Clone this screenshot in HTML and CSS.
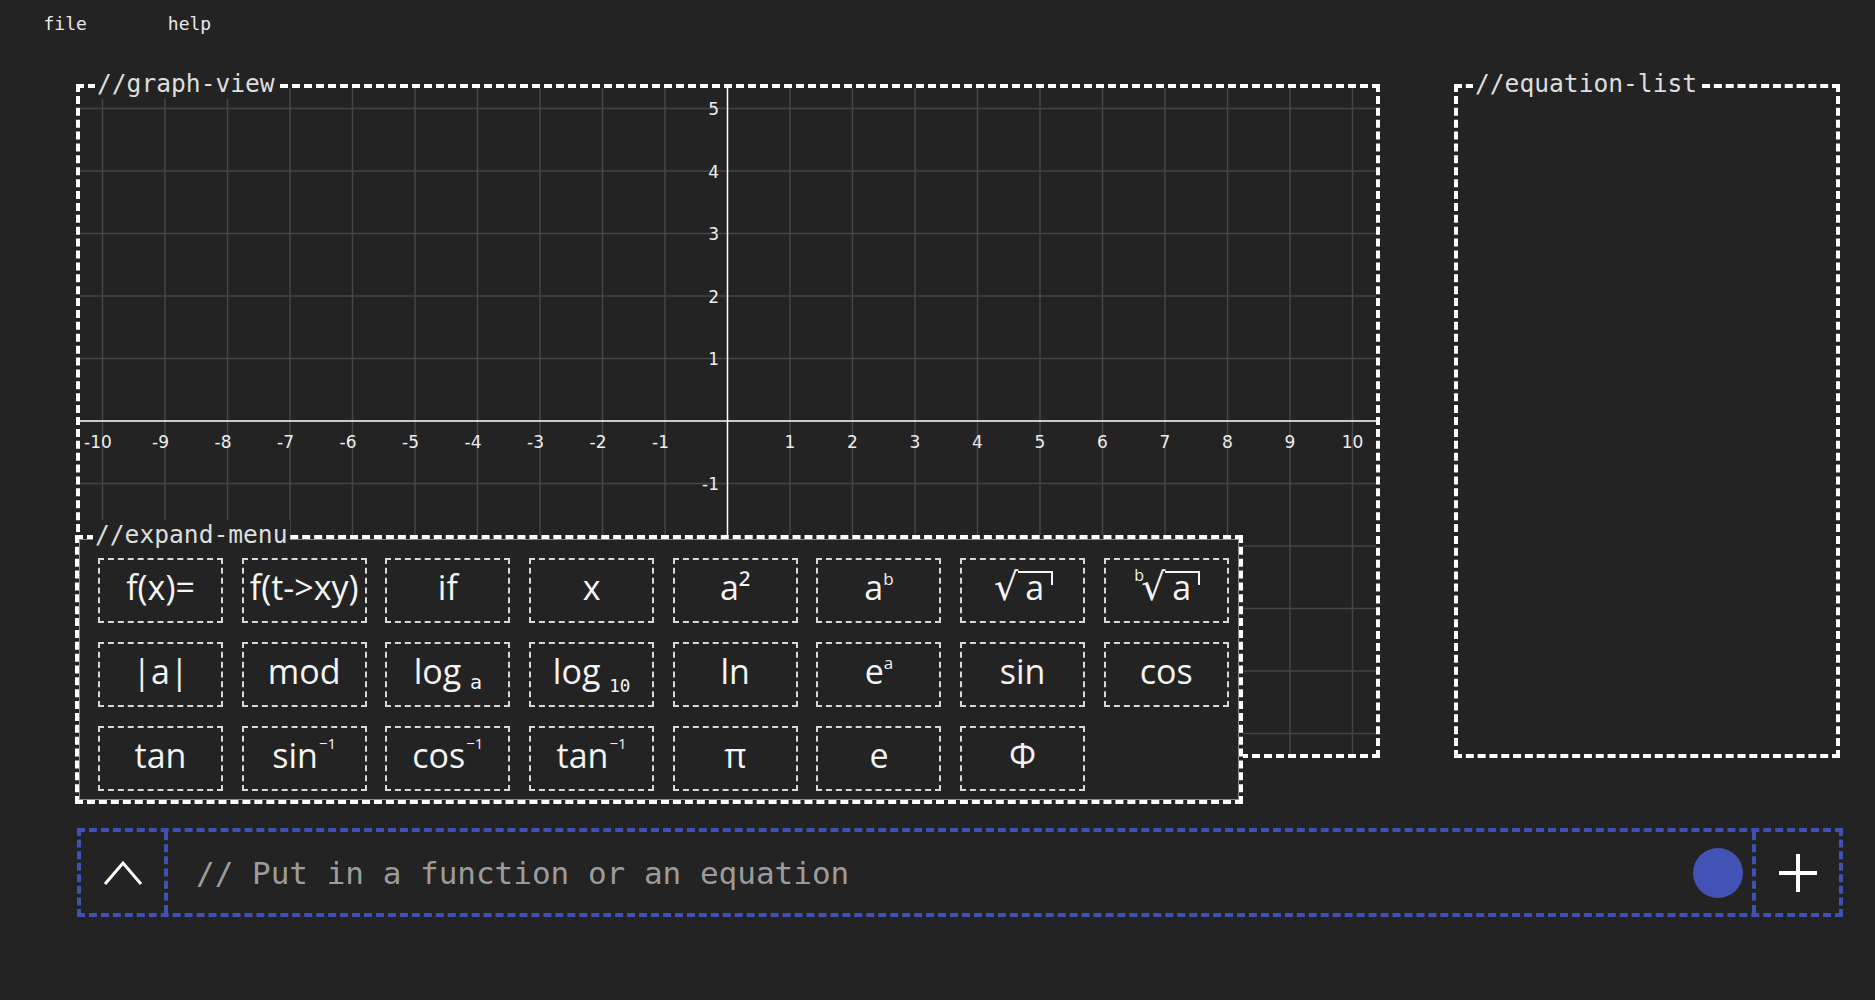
FILE: index.html
```html
<!DOCTYPE html>
<html lang="en">
<head>
<meta charset="utf-8">
<title>Graph</title>
<link rel="stylesheet" href="styles.css">
</head>
<body>
<nav class="menubar">
  <span class="menu-item">file</span>
  <span class="menu-item">help</span>
</nav>
<main class="app">
  <div class="workspace">
    <section class="panel graph-view">
      <span class="legend">//graph-view</span>
      <svg class="graph" viewBox="0 0 1296 666" xmlns="http://www.w3.org/2000/svg">
        <g transform="translate(-1 -1)">
        <path class="grid" d="M23.5 0V668M86 0V668M148.5 0V668M211 0V668M273.5 0V668M336 0V668M398.5 0V668M461 0V668M523.5 0V668M586 0V668M711 0V668M773.5 0V668M836 0V668M898.5 0V668M961 0V668M1023.5 0V668M1086 0V668M1148.5 0V668M1211 0V668M1273.5 0V668M0 21.5H1298M0 84H1298M0 146.5H1298M0 209H1298M0 271.5H1298M0 396.5H1298M0 459H1298M0 521.5H1298M0 584H1298M0 646.5H1298"/>
        <path class="axis" d="M0 334H1298M648.5 0V668"/>
        <g class="xlabels">
          <text x="19" y="361">-10</text>
          <text x="81.5" y="361">-9</text>
          <text x="144" y="361">-8</text>
          <text x="206.5" y="361">-7</text>
          <text x="269" y="361">-6</text>
          <text x="331.5" y="361">-5</text>
          <text x="394" y="361">-4</text>
          <text x="456.5" y="361">-3</text>
          <text x="519" y="361">-2</text>
          <text x="581.5" y="361">-1</text>
          <text x="711" y="361">1</text>
          <text x="773.5" y="361">2</text>
          <text x="836" y="361">3</text>
          <text x="898.5" y="361">4</text>
          <text x="961" y="361">5</text>
          <text x="1023.5" y="361">6</text>
          <text x="1086" y="361">7</text>
          <text x="1148.5" y="361">8</text>
          <text x="1211" y="361">9</text>
          <text x="1273.5" y="361">10</text>
        </g>
        <g class="ylabels">
          <text x="640" y="28">5</text>
          <text x="640" y="90.5">4</text>
          <text x="640" y="153">3</text>
          <text x="640" y="215.5">2</text>
          <text x="640" y="278">1</text>
          <text x="640" y="403">-1</text>
          <text x="640" y="465.5">-2</text>
          <text x="640" y="528">-3</text>
          <text x="640" y="590.5">-4</text>
          <text x="640" y="653">-5</text>
        </g>
        </g>
      </svg>
    </section>
    <section class="panel equation-list">
      <span class="legend">//equation-list</span>
    </section>
    <section class="expand-menu">
      <span class="legend">//expand-menu</span>
      <div class="keys">
        <div class="key">f(x)=</div>
        <div class="key">f(t-&gt;xy)</div>
        <div class="key">if</div>
        <div class="key">x</div>
        <div class="key">a²</div>
        <div class="key">a<sup>b</sup></div>
        <div class="key"><span class="rad">√</span><span class="radicand">a</span></div>
        <div class="key"><sup class="idx">b</sup><span class="rad">√</span><span class="radicand">a</span></div>
        <div class="key">|a|</div>
        <div class="key">mod</div>
        <div class="key">log <sub class="sub-a">a</sub></div>
        <div class="key">log <sub class="sub-10">10</sub></div>
        <div class="key">ln</div>
        <div class="key">e<sup>a</sup></div>
        <div class="key">sin</div>
        <div class="key">cos</div>
        <div class="key">tan</div>
        <div class="key">sin<sup class="inv">−1</sup></div>
        <div class="key">cos<sup class="inv">−1</sup></div>
        <div class="key">tan<sup class="inv">−1</sup></div>
        <div class="key">π</div>
        <div class="key">e</div>
        <div class="key">Φ</div>
      </div>
    </section>
  </div>
  <div class="input-bar">
    <button class="cell chev" type="button" aria-label="expand">
      <svg width="40" height="26" viewBox="0 0 40 26"><polyline points="2,24 20,3 38,24" fill="none" stroke="#fff" stroke-width="3"/></svg>
    </button>
    <div class="entry">
      <input type="text" placeholder="// Put in a function or an equation">
      <span class="dot"></span>
    </div>
    <button class="cell add" type="button" aria-label="add">
      <svg width="40" height="40" viewBox="0 0 40 40"><path d="M20 1V39M1 20H39" stroke="#fff" stroke-width="4"/></svg>
    </button>
  </div>
</main>
</body>
</html>
```

FILE: styles.css
```css
* { box-sizing: border-box; }
html, body { margin: 0; background: #232323; }
body {
  width: 1875px;
  height: 1000px;
  overflow: hidden;
  color: #e6e6e6;
  font-family: "DejaVu Sans Mono", "Liberation Mono", monospace;
}
.menubar {
  display: flex;
  height: 34px;
  padding: 13px 0 0 3px;
  font-size: 18px;
  line-height: 21px;
}
.menu-item { padding: 0 40.5px; color: #e8e8e8; }

.workspace {
  position: relative;
  display: flex;
  gap: 74px;
  height: 674px;
  margin: 50px 0 0 76px;
}
.panel {
  position: relative;
  height: 674px;
  border: 4px dashed #fff;
}
.graph-view { width: 1304px; }
.equation-list { width: 386px; }
.legend {
  position: absolute;
  top: -19px;
  left: 15px;
  padding: 0 2px;
  background: #232323;
  color: #dedede;
  font-size: 24.6px;
  line-height: 30px;
  white-space: nowrap;
}
.graph { display: block; width: 100%; height: 100%; }
.grid { fill: none; stroke: #464646; stroke-width: 1.5; }
.axis { fill: none; stroke: #fff; stroke-width: 1.5; }
.graph text { font-family: "DejaVu Sans", sans-serif; font-size: 17px; fill: #eee; }
.xlabels text { text-anchor: middle; }
.ylabels text { text-anchor: end; }

.expand-menu {
  position: absolute;
  left: -1px;
  top: 451px;
  width: 1168px;
  height: 269px;
  padding: 19px 10px 9px 19px;
  border: 4px dashed #fff;
  background: #232323;
  box-shadow: inset 0 0 0 1px #8a8a8a;
}
.expand-menu .legend { left: 14px; }
.keys {
  display: grid;
  grid-template-columns: repeat(8, 125px);
  grid-auto-rows: 65px;
  column-gap: 18.7px;
  row-gap: 19px;
}
.key {
  border: 2px dashed #d8d8d8;
  color: #f4f4f4;
  font-family: "Open Sans", "Noto Sans", "DejaVu Sans", sans-serif;
  font-size: 34px;
  line-height: 54px;
  text-align: center;
  white-space: nowrap;
}
.key sup {
  font-size: 17px;
  vertical-align: 15px;
  line-height: 1;
}
.key sup.inv { font-size: 15px; vertical-align: 19px; margin-left: 1px; }
.key sub { line-height: 1; font-family: "DejaVu Sans Mono", monospace; }
.sub-a { font-size: 20px; vertical-align: -5px; }
.sub-10 { font-size: 17.5px; vertical-align: -8px; }
.rad { font-family: "DejaVu Sans", sans-serif; font-size: 38px; }
.radicand {
  position: relative;
  display: inline-block;
  line-height: 28px;
  padding: 0 7px 0 7px;
  border-top: 2px solid #f4f4f4;
}
.radicand::after {
  content: "";
  position: absolute;
  right: -2px;
  top: -2px;
  width: 2px;
  height: 14px;
  background: #f4f4f4;
}
.key sup.idx { font-size: 16px; margin-right: -3px; vertical-align: 19px; }

.input-bar {
  display: flex;
  width: 1766px;
  height: 89px;
  margin: 70px 0 0 77px;
  border: 4px dashed #3f51b5;
}
.cell {
  display: flex;
  align-items: center;
  justify-content: center;
  width: 87px;
  padding: 0;
  background: transparent;
  border: 0;
}
.chev { border-right: 4px dashed #3f51b5; }
.add { border-left: 4px dashed #3f51b5; }
.entry {
  flex: 1;
  display: flex;
  align-items: center;
  padding: 0 9px 0 28px;
}
.entry input {
  flex: 1;
  padding: 0;
  border: 0;
  outline: none;
  background: transparent;
  color: #eee;
  font-family: "DejaVu Sans Mono", "Liberation Mono", monospace;
  font-size: 31px;
}
.entry input::placeholder { color: #9c9c9c; }
.dot {
  width: 50px;
  height: 50px;
  border-radius: 50%;
  background: #4353b5;
}
```
